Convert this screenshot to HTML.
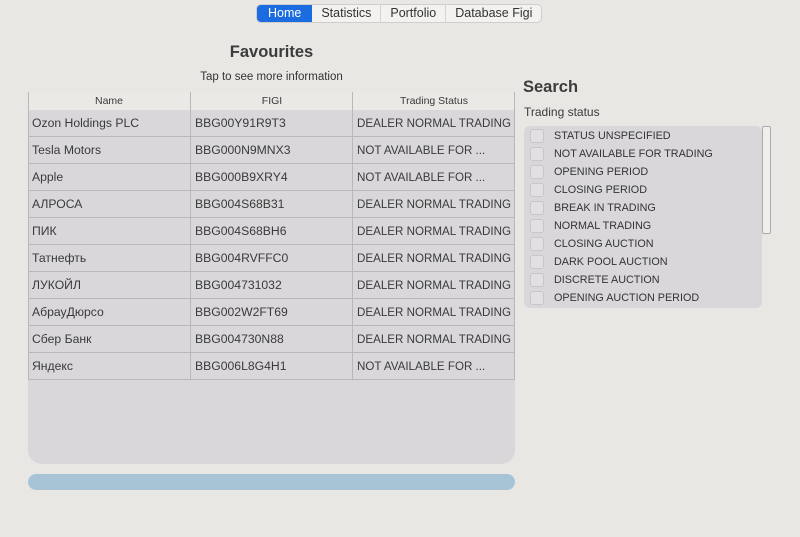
<!DOCTYPE html>
<html><head><meta charset="utf-8"><style>
*{margin:0;padding:0;box-sizing:border-box}
body{width:800px;height:537px;background:#e9e7e4;font-family:"Liberation Sans","Noto Sans CJK SC",sans-serif;color:#3a3a3a;position:relative;overflow:hidden}
.a{position:absolute}
.seg{left:256px;top:4px;height:19px;display:flex;border:1px solid #d0cecb;border-radius:5px;background:#f3f2f0;font-size:12.5px;overflow:hidden}
.seg div{padding:0 9px;line-height:17px;border-left:1px solid #d6d4d1;color:#333}
.seg div.on{background:#1a6ce0;color:#fff;border-left:none;padding:0 11px}
.tbl{left:28px;top:92px;width:487px;height:372px;background:#d9d7da;border-radius:0 0 14px 14px}
.row{position:absolute;left:0;width:487px;height:27px;border-bottom:1px solid #b9b7ba;font-size:12.2px}
.row span{position:absolute;top:0;line-height:26px;white-space:nowrap}
.row span.t{font-size:11.6px;top:1px}
.vl{position:absolute;top:0;width:1px;background:#b9b7ba}
.hdr{position:absolute;top:0;height:18px;font-size:10.5px;text-align:center;line-height:18px;background:#ebe9e6}
.box{left:524px;top:126px;width:238px;height:182px;background:#d9d7da;border-radius:6px}
.it{position:absolute;left:6px;height:18px;font-size:10.8px;color:#333}
.it i{position:absolute;left:0;top:1px;width:14px;height:14px;border-radius:3px;background:#e2e0e3;border:1px solid #c8c6c9}
.it span{position:absolute;left:24px;top:2px;white-space:nowrap}
</style></head><body>
<div class="a seg"><div class="on">Home</div><div style="border-left:none">Statistics</div><div>Portfolio</div><div>Database Figi</div></div>
<div class="a" style="left:0;width:543px;top:43px;text-align:center;font-weight:bold;font-size:16.5px;color:#3c3c3c">Favourites</div>
<div class="a" style="left:28px;width:487px;top:71px;text-align:center;font-size:11.5px;color:#333">Tap to see more information</div>
<div class="a tbl">
<div class="hdr" style="left:0;width:162px">Name</div>
<div class="hdr" style="left:163px;width:162px">FIGI</div>
<div class="hdr" style="left:325px;width:162px">Trading Status</div>
<div id="rows"></div>
<div class="vl" style="left:0;height:287px"></div>
<div class="vl" style="left:162px;height:287px"></div>
<div class="vl" style="left:324px;height:287px"></div>
<div class="vl" style="left:486px;height:287px"></div>
</div>
<div class="a" style="left:28px;top:474px;width:487px;height:16px;background:#a7c4d6;border-radius:8px"></div>
<div class="a" style="left:523px;top:78px;font-weight:bold;font-size:16.5px;color:#3c3c3c">Search</div>
<div class="a" style="left:524px;top:105px;font-size:12px">Trading status</div>
<div class="a box" id="box"></div>
<div class="a" style="left:762px;top:126px;width:9px;height:108px;border:1px solid #aaa;border-radius:2px;background:#f0efed"></div>
<script>
var d=[["Ozon Holdings PLC","BBG00Y91R9T3","DEALER NORMAL TRADING"],["Tesla Motors","BBG000N9MNX3","NOT AVAILABLE FOR ..."],["Apple","BBG000B9XRY4","NOT AVAILABLE FOR ..."],["АЛРОСА","BBG004S68B31","DEALER NORMAL TRADING"],["ПИК","BBG004S68BH6","DEALER NORMAL TRADING"],["Татнефть","BBG004RVFFC0","DEALER NORMAL TRADING"],["ЛУКОЙЛ","BBG004731032","DEALER NORMAL TRADING"],["АбрауДюрсо","BBG002W2FT69","DEALER NORMAL TRADING"],["Сбер Банк","BBG004730N88","DEALER NORMAL TRADING"],["Яндекс","BBG006L8G4H1","NOT AVAILABLE FOR ..."]];
var h="";d.forEach(function(r,i){h+='<div class="row" style="top:'+(18+i*27)+'px"><span style="left:4px">'+r[0]+'</span><span style="left:167px">'+r[1]+'</span><span class="t" style="left:329px">'+r[2]+'</span></div>'});
document.getElementById("rows").innerHTML=h;
var s=["STATUS UNSPECIFIED","NOT AVAILABLE FOR TRADING","OPENING PERIOD","CLOSING PERIOD","BREAK IN TRADING","NORMAL TRADING","CLOSING AUCTION","DARK POOL AUCTION","DISCRETE AUCTION","OPENING AUCTION PERIOD"];
h="";s.forEach(function(t,i){h+='<div class="it" style="top:'+(2+i*18)+'px"><i></i><span>'+t+'</span></div>'});
document.getElementById("box").innerHTML=h;
</script>
</body></html>
